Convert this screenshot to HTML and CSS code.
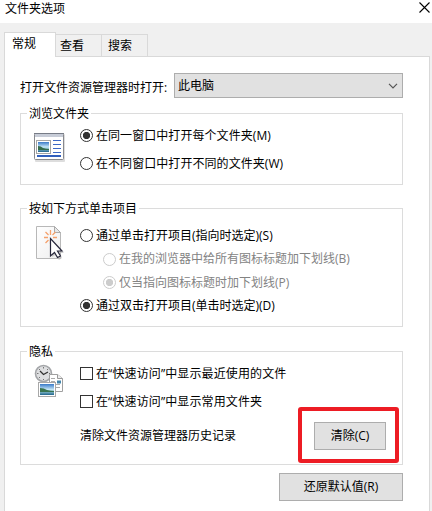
FILE: index.html
```html
<!DOCTYPE html>
<html lang="zh-CN">
<head>
<meta charset="utf-8">
<title>文件夹选项</title>
<link rel="stylesheet" href="styles.css">
</head>
<body>
<header class="titlebar">
  <span>文件夹选项</span>
  <svg class="close" width="11" height="11" viewBox="0 0 11 11"><path d="M.5.5l10 10M10.500.5l-10 10" stroke="#000" stroke-width="1.1"/></svg>
</header>
<nav class="tabs">
  <div class="tab active">常规</div>
  <div class="tab">查看</div>
  <div class="tab last">搜索</div>
</nav>
<main class="panel">
  <div class="open-row">
    <span>打开文件资源管理器时打开:</span>
    <div class="select"><span>此电脑</span>
      <svg width="10" height="6" viewBox="0 0 10 6"><path d="M1 .8l4 4 4-4" fill="none" stroke="#555" stroke-width="1.2"/></svg>
    </div>
  </div>

  <section class="group browse">
    <h2 class="legend">浏览文件夹</h2>
    <svg class="icon" width="34" height="32" viewBox="0 0 34 32">
      <defs>
        <linearGradient id="sky" x1="0" y1="0" x2="0" y2="1"><stop offset="0" stop-color="#3979c8"/><stop offset=".5" stop-color="#c5e6f6"/><stop offset=".7" stop-color="#83b9c8"/><stop offset="1" stop-color="#1f638b"/></linearGradient>
      </defs>
      <rect x="2" y="2" width="30" height="28" rx="1" fill="#ddd"/>
      <rect x="1.500" y="1.500" width="29" height="26" rx="1" fill="#fff" stroke="#88898e"/>
      <path d="M2 3.500h28" stroke="#c7ccd7" stroke-width="3"/><path d="M1 1.500h30" stroke="#777c87"/>
      <rect x="3.500" y="8.500" width="14" height="13" fill="#fff" stroke="#a5a5a5"/>
      <rect x="5" y="10" width="11" height="10" fill="url(#sky)"/>
      <path d="M5 14q3 0 5 2 3 1 6 1v1H5z" fill="#356c4c"/>
      <path d="M20 8.500h8M20 12.500h8M20 16.500h8M20 20.500h8" stroke="#3c68c5"/>
      <path d="M4 24h24" stroke="#315fbd" stroke-width="2"/>
    </svg>
    <div class="options">
      <div class="option"><i class="radio on"></i>在同一窗口中打开每个文件夹(M)</div>
      <div class="option"><i class="radio"></i>在不同窗口中打开不同的文件夹(W)</div>
    </div>
  </section>

  <section class="group click">
    <h2 class="legend">按如下方式单击项目</h2>
    <svg class="icon" width="34" height="36" viewBox="0 0 34 36">
      <defs><linearGradient id="paper" x1="0" y1="0" x2="1" y2="1"><stop offset="0" stop-color="#fff"/><stop offset="1" stop-color="#eee"/></linearGradient></defs>
      <path d="M3.500 1.500h18l6 6v26h-24z" fill="url(#paper)" stroke="#b8b8b8"/>
      <path d="M21.500 1.500v6h6z" fill="#e8e8e8" stroke="#aaa"/>
      <path d="M17.500 5v5M17.500 15v4M11 12.500h4M20 12.500h4M12.500 7l3 3M22.500 7l-3 3M12.500 18l3-3" stroke="#f5a06b" stroke-width="1.300"/>
      <path d="M19 16l12 12h-5l3 5-3 2-4-5-3 2z" fill="#bbb" opacity=".7"/>
      <path d="M17.500 13.500v17.500l4-3.500 3 5 3-1.500-3-5h4.500z" fill="#fff" stroke="#26263a" stroke-width="1.200"/>
    </svg>
    <div class="options">
      <div class="option"><i class="radio"></i>通过单击打开项目(指向时选定)(S)</div>
      <div class="option sub first"><i class="radio"></i>在我的浏览器中给所有图标标题加下划线(B)</div>
      <div class="option sub"><i class="radio on"></i>仅当指向图标标题时加下划线(P)</div>
      <div class="option"><i class="radio on"></i>通过双击打开项目(单击时选定)(D)</div>
    </div>
  </section>

  <section class="group privacy">
    <h2 class="legend">隐私</h2>
    <svg class="icon" width="34" height="34" viewBox="0 0 34 34">
      <circle cx="10.500" cy="9.500" r="8" fill="#dedfe1" stroke="#a4a6a9" stroke-width="1.600"/>
      <path d="M10.500 3v1.500M10.500 15v1M4 9.500h1.500M16 9.500h1M6 5l1 1M15 5l-1 1M6 14l1-1" stroke="#777"/>
      <path d="M7 7l3.500 3.500L15 8" fill="none" stroke="#333" stroke-width="1.300"/>
      <path d="M16.500 10.500h8l5 4v13h-13z" fill="#fff" stroke="#a0a0a0"/>
      <path d="M24.500 10.500v4h5" fill="#eee" stroke="#999"/>
      <path d="M18 14.500h4M18 17.500h4M18 20.500h9M22 23.500h5" stroke="#aaa"/>
      <path d="M24 16.500h4v3h-4z" fill="#4386ad"/>
      <rect x="5.500" y="18.500" width="17" height="14" fill="#fff" stroke="#a8a8a8"/>
      <rect x="7" y="20" width="14" height="11" fill="url(#sky)"/>
      <path d="M7 24q4 0 7 2 4 1 7 1v1H7z" fill="#397450"/>
    </svg>
    <div class="options">
      <div class="option"><i class="check"></i>在“快速访问”中显示最近使用的文件</div>
      <div class="option"><i class="check"></i>在“快速访问”中显示常用文件夹</div>
      <div class="history"><span>清除文件资源管理器历史记录</span><div class="button clear">清除(C)<span class="highlight"></span></div></div>
    </div>
  </section>
  <div class="button restore">还原默认值(R)</div>
</main>
</body>
</html>
```

FILE: styles.css
```css
* { box-sizing: border-box; }
body {
  margin: 0;
  width: 432px;
  height: 511px;
  overflow: hidden;
  display: flex;
  flex-direction: column;
  background: #f0f0f0;
  color: #000;
  font: 12px/16px "Open Sans", "Noto Sans CJK SC", sans-serif;
  white-space: nowrap;
}
svg { display: block; }
.titlebar {
  flex: none;
  height: 23px;
  padding: 0 2px 0 5px;
  display: flex;
  justify-content: space-between;
  align-items: flex-start;
  background: #fff;
}
.close { margin-top: 2px; }
.tabs {
  position: relative;
  z-index: 1;
  flex: none;
  height: 34px;
  padding: 9px 0 0 4px;
  display: flex;
  align-items: flex-end;
}
.tab {
  width: 46px;
  height: 23px;
  padding: 3px 0 0 4px;
  border: 1px solid #d9d9d9;
  border-left: 0;
}
.tab.last { padding-left: 6px; }
.tab.active {
  width: 52px;
  height: 25px;
  padding: 3px 0 0 7px;
  border-left: 1px solid #d9d9d9;
  border-bottom: 0;
  background: #fff;
}
.panel {
  flex: 1;
  width: 426px;
  margin: -1px 0 0 4px;
  padding: 16px 26px 0 15px;
  border: solid #d9d9d9;
  border-width: 1px 1px 0;
  background: #fff;
}
.titlebar span { padding-top: 1px; }
.open-row {
  height: 25px;
  margin-bottom: 15px;
  display: flex;
  justify-content: space-between;
  align-items: center;
}
.open-row > span { padding-top: 5px; }
.select {
  width: 229px;
  height: 25px;
  padding: 0 4px 0 3px;
  display: flex;
  align-items: center;
  justify-content: space-between;
  border: 1px solid #adadad;
  background: #e1e1e1;
}
.group {
  position: relative;
  width: 383px;
  display: flex;
  border: 1px solid #dcdcdc;
}
.browse { height: 72px; margin-bottom: 23px; }
.click { height: 119px; margin-bottom: 24px; }
.privacy { height: 114px; margin-bottom: 8px; }
.legend {
  position: absolute;
  left: 6px;
  top: -8px;
  margin: 0;
  padding: 0 2px;
  font: inherit;
  background: #fff;
}
.icon { flex: none; margin: 18px 14px 0 12px; }
.click .icon { margin-top: 16px; }
.privacy .icon { margin-top: 12px; }
.options { flex: 1; margin-left: -1px; }
.option {
  height: 28px;
  display: flex;
  align-items: center;
  gap: 3px;
}
.browse .options { padding-top: 7.5px; letter-spacing: .06px; }
.click .options { padding-top: 15px; }
.click .option { height: 23px; }
.click .option.first { height: 24px; }
.privacy .options { padding-top: 7.5px; }
.privacy .option { letter-spacing: .12px; }
.sub { padding-left: 23px; color: #838383; }
.radio, .check {
  flex: none;
  width: 13px;
  height: 13px;
  border: 1px solid #333;
  background: #fff;
}
.radio { border-radius: 50%; }
.radio.on { background: radial-gradient(circle, #333 0 3.3px, #fff 4px); }
.sub .radio { border-color: #ccc; }
.sub .radio.on { background: radial-gradient(circle, #ccc 0 3.3px, #fff 4px); }
.history {
  height: 28px;
  margin: 6.5px 16px 0 0;
  display: flex;
  justify-content: space-between;
  align-items: center;
}
.button {
  height: 28px;
  display: flex;
  align-items: center;
  justify-content: center;
  border: 1px solid #adadad;
  background: #e1e1e1;
}
.clear { position: relative; width: 72px; }
.highlight {
  position: absolute;
  left: -17px;
  top: -16px;
  width: 101px;
  height: 56px;
  border: 4px solid #ed1c24;
  border-radius: 3px;
}
.restore { width: 124px; margin-left: 259px; }
```
